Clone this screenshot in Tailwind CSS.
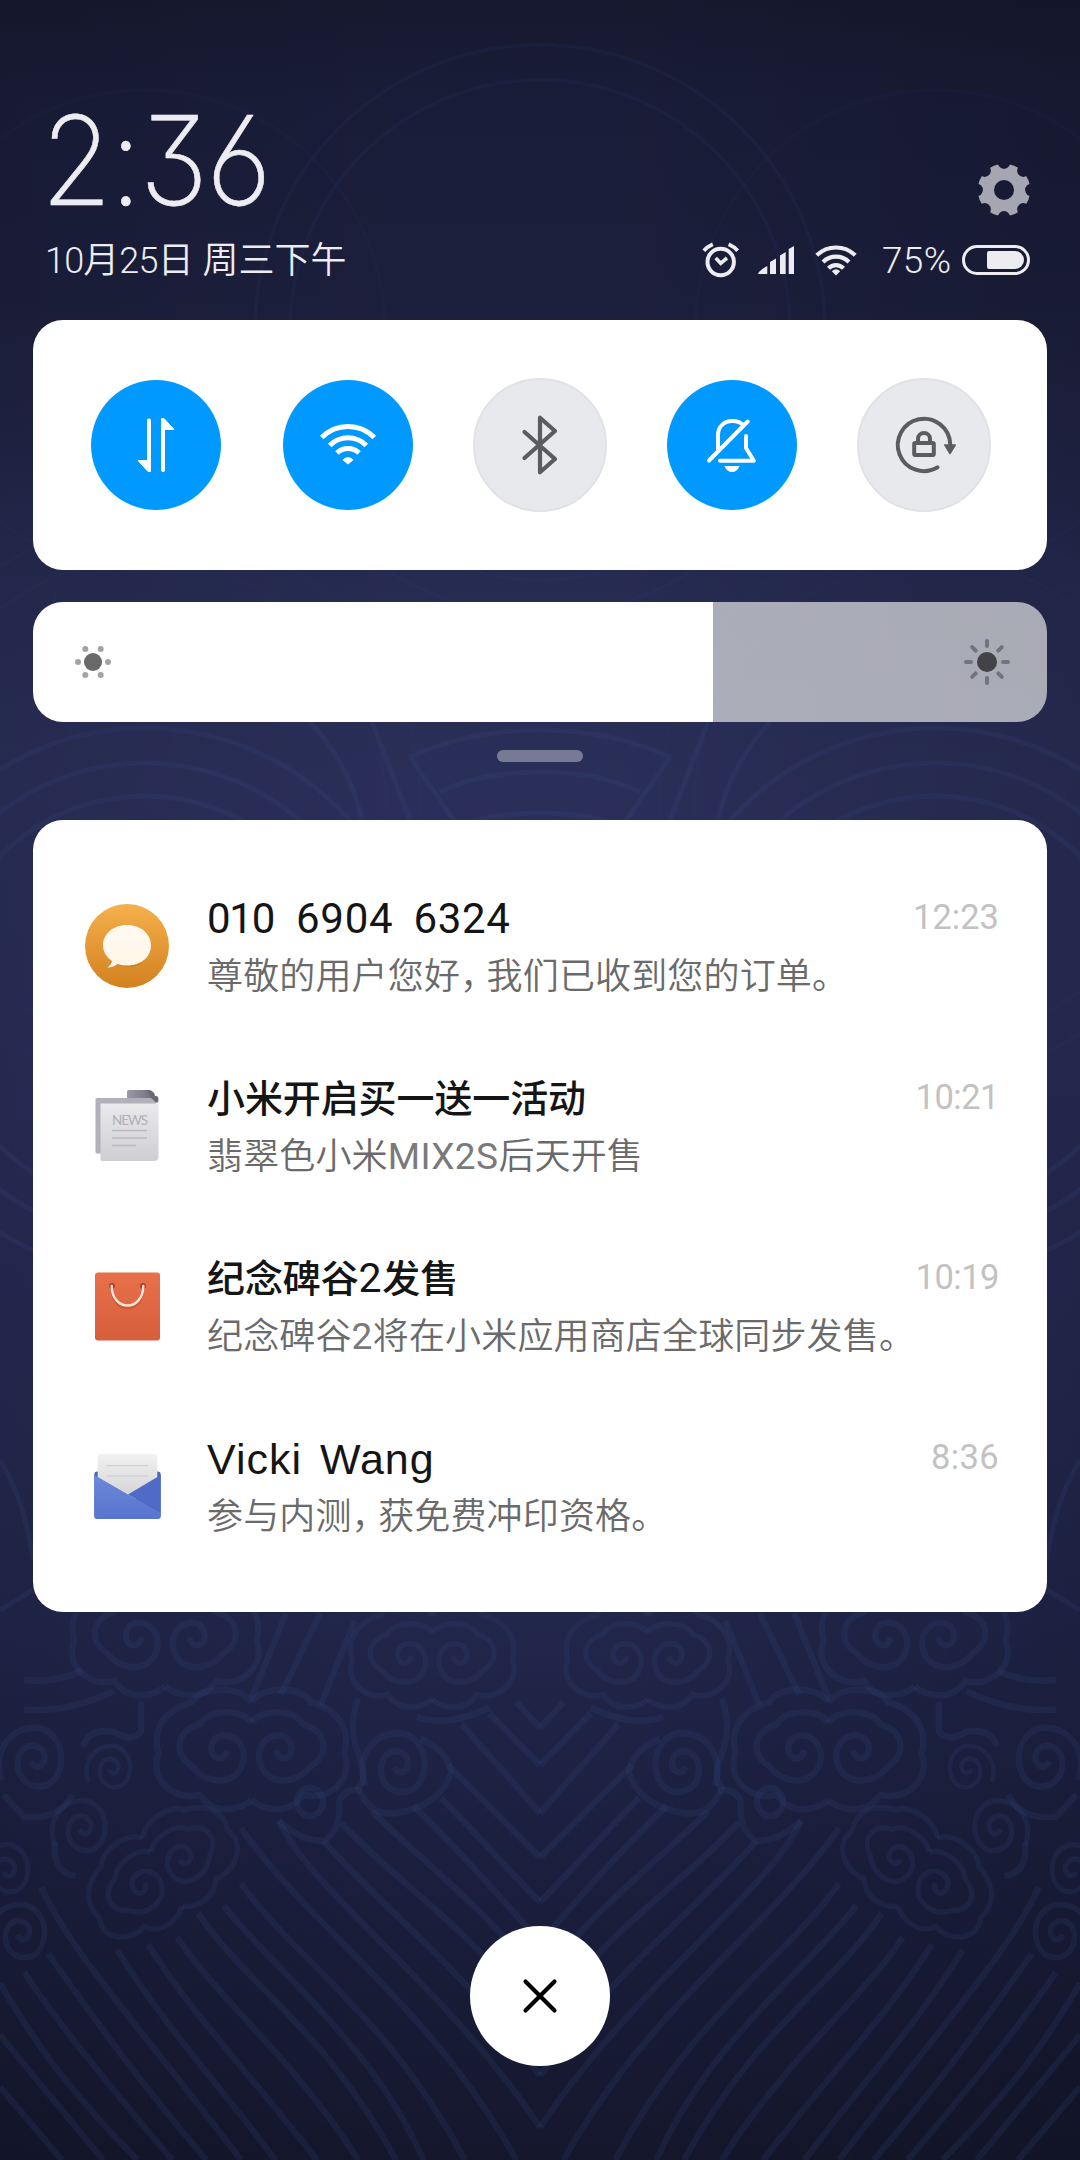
<!DOCTYPE html>
<html lang="zh-CN">
<head>
<meta charset="utf-8">
<title>通知中心</title>
<script src="https://cdn.jsdelivr.net/npm/@tailwindcss/browser@4"></script>
</head>
<body class="w-[1080px] h-[2160px] overflow-hidden font-[Roboto,'Noto_Sans_CJK_SC',sans-serif]">
<div class="relative w-[1080px] h-[2160px] overflow-hidden bg-[linear-gradient(to_bottom,#16192f_0%,#1a1d39_5%,#1c1f3c_14%,#262b52_27%,#2a2f59_36%,#292d58_50%,#21264b_75%,#1a1e3c_88%,#14172c_100%)]">
  <div class="absolute inset-0 bg-[linear-gradient(to_right,rgba(0,0,0,.09),transparent_40%,transparent_55%,rgba(0,0,0,.14))]"></div>

  <!-- wallpaper line pattern -->
  <svg class="absolute inset-0" width="1080" height="2160" viewBox="0 0 1080 2160" fill="none" stroke="#364a80" stroke-opacity=".19">
    <defs>
      <g id="halfcloud">
        <path d="M0,-85C-30,-125-130,-120-150,-80C-225,-60-225,5-170,35C-125,90-30,85-22,10C-20,-60-115,-70-117,-15C-115,20-75,20-72,-10"/>
        <path d="M0,-140C-40,-190-150,-180-172,-140C-250,-120-290,-70-270,0C-300,70-220,130-150,110C-110,170-30,150 0,125"/>
      </g>
      <g id="cloud"><use href="#halfcloud"/><use href="#halfcloud" transform="scale(-1 1)"/></g>
      <path id="curl" d="M-90,60C-120,-20-60,-90 20,-80C100,-60 100,50 40,75C-30,95-65,20-30,-20C0,-50 50,-20 30,15C20,30 0,25-5,10"/>
      <g id="half">
        <g transform="translate(0 1580) scale(.3444 .37)" stroke-width="18">
          <use href="#cloud" x="730" y="470"/>
          <use href="#cloud" transform="translate(475 795) rotate(-32) scale(.82)"/>
          <use href="#cloud" transform="translate(480 165) scale(.98)"/>
          <use href="#cloud" transform="translate(1255 215) scale(.86)"/>
          <use href="#curl" x="1150" y="495"/>
          <use href="#curl" x="95" y="480"/>
          <use href="#curl" transform="translate(320 505) scale(.7)"/>
          <use href="#curl" transform="translate(235 665) scale(.85)"/>
          <circle cx="900" cy="600" r="38"/>
          <use href="#curl" transform="translate(55 950) scale(.9)"/>
          <use href="#curl" transform="translate(15 780) scale(.8)"/>
          <path d="M1040,320Q1010,400 1040,470T1040,560Q1070,640 1150,630Q1280,610 1310,520Q1300,460 1220,430M1210,370Q1300,400 1420,345"/>
          <path d="M810,650Q870,705 940,705Q990,680 985,600Q1000,560 1050,570M70,270Q160,280 240,245M70,350Q200,360 330,300M410,330V410Q380,440 330,410Q260,400 240,450M10,580L70,640Q170,650 210,580M160,710Q150,790 220,800"/>
          <path d="M830,90L730,320M930,90L815,310M1030,110L930,340"/>
          <path d="M120,830C200,1000 400,1200 700,1568M140,1010C300,1220 400,1350 600,1568M70,1060C200,1240 350,1400 500,1568M0,1090C100,1250 200,1380 400,1568M340,1000C480,1210 650,1380 800,1568M430,985C560,1180 760,1370 920,1568M515,965C620,1120 860,1300 1040,1568M575,900C700,1080 950,1220 1150,1568M650,880C800,1060 1080,1250 1230,1568M700,820C850,1020 1130,1180 1350,1568M700,670C900,940 1250,1150 1500,1568M810,650C900,840 1300,1100 1568,1480M940,705C1100,880 1350,1050 1568,1340M990,655C1150,820 1350,920 1568,1200M1080,625C1250,780 1400,880 1568,1080M1200,610C1300,700 1420,820 1568,980M1280,590C1380,680 1480,790 1568,870M1300,500L1568,750M1340,390L1568,630M1420,360L1568,500M1500,330L1568,400M0,1230L300,1568M0,1370L180,1568"/>
        </g>
        <g stroke-width="5">
          <circle cx="145" cy="1001" r="205"/><circle cx="145" cy="1001" r="238"/><circle cx="145" cy="1001" r="273"/>
          <path d="M310,722Q350,765 362,820M372,722L410,820M410,757Q470,730 540,730M440,792Q480,772 540,772M470,822Q500,813 540,813M410,757L455,822"/>
          <path d="M0,1460Q25,1500 33,1560M0,1610L33,1590"/>
        </g>
        <g stroke-width="4" stroke-opacity=".05">
          <circle cx="145" cy="800" r="240"/><circle cx="145" cy="800" r="275"/><circle cx="540" cy="330" r="250"/><circle cx="540" cy="330" r="285"/><circle cx="145" cy="330" r="240"/>
        </g>
      </g>
    </defs>
    <use href="#half"/>
    <use href="#half" transform="translate(1080 0) scale(-1 1)"/>
  </svg>

  <div class="relative flex h-full flex-col px-[33px]">
    <!-- header -->
    <header class="flex h-[320px] flex-col pt-[97px] pl-[12px] pr-[17px] text-[#ececf1]">
      <div class="flex h-[133px] justify-between">
        <div class="-ml-[4px] flex origin-left scale-x-[.925] text-[124px] leading-[126px] font-extralight tracking-[-2px] font-[Inter] [font-feature-settings:'cv03','cv09'] [-webkit-text-stroke:.6px_#ececf1]">2:36</div>
        <svg class="mt-[66px] -mr-[1px]" width="54" height="54" viewBox="-27 -27 54 54">
          <mask id="gear" maskUnits="userSpaceOnUse" x="-27" y="-27" width="54" height="54"><circle r="26.300" fill="#fff"/><circle r="10"/>
            <g id="n"><circle cx="0" cy="-27.300" r="6.200"/><circle cx="0" cy="27.300" r="6.200"/><circle cx="27.300" r="6.200"/><circle cx="-27.300" r="6.200"/></g>
            <use href="#n" transform="rotate(45)"/></mask>
          <rect x="-27" y="-27" width="54" height="54" fill="#a5a6b1" mask="url(#gear)"/>
        </svg>
      </div>
      <div class="flex h-[60px] items-center justify-between">
        <div class="mt-[2px] text-[36px] leading-none font-[350] whitespace-pre"><span class="tracking-[-.8px]">10</span>月<span class="tracking-[-.8px]">25</span>日 周三下午</div>
        <div class="flex items-center">
          <svg class="-translate-x-px" width="38" height="36" viewBox="0 0 38 36" fill="none" stroke="currentColor"><circle cx="18.700" cy="20" r="13.200" stroke-width="4"/><path d="M13.700,16L18.700,21.300L25,16" stroke-width="3.600"/><path d="M1.800,8.800Q5.500,4.500 10.800,2.200M35.600,8.800Q32,4.500 26.600,2.200" stroke-width="3.800"/></svg>
          <svg class="ml-[17px]" width="36" height="28" viewBox="0 0 36 28" fill="currentColor"><path d="M0,28L1,26Q5,22 9.300,20V28ZM12,28V16L18,12.500V28ZM22,28V9.500L27.700,6V28ZM30.700,28V3L36,0V28Z"/></svg>
          <svg class="ml-[21px]" width="42" height="31" viewBox="0 0 42 31" fill="none" stroke="currentColor" stroke-width="4.200"><path d="M1.800,10.300A27.500 27.500 0 0 1 40.200,10.300M8,17A18.500 18.500 0 0 1 34,17M13.500,23.200A10.500 10.500 0 0 1 28.500,23.200"/><path stroke="none" fill="currentColor" d="M16.800,26.300Q21,22 25.200,26.300L21,30.500Z"/></svg>
          <span class="ml-[25px] mt-[1px] w-[71px] text-[37px] leading-none font-[350] tracking-[.3px] whitespace-nowrap">75%</span>
          <svg class="ml-[9px]" width="68" height="30" viewBox="0 0 68 30"><rect x="1.500" y="1.500" width="65" height="27" rx="13.500" fill="none" stroke="currentColor" stroke-width="3"/><path d="M25,8Q25,6 27,6H53A9 9 0 0 1 53,24H27Q25,24 25,22Z" fill="currentColor"/></svg>
        </div>
      </div>
    </header>

    <!-- quick toggles -->
    <section class="flex h-[250px] items-center justify-between rounded-[30px] bg-white px-[56px]">
      <div class="mx-[2px] flex size-[130px] items-center justify-center rounded-full bg-[#0099ff]">
        <svg width="80" height="80" viewBox="-40 -40 80 80" fill="#fff" stroke="#fff" stroke-width="1" stroke-linejoin="round"><path d="M-8.500,-25.500Q-7,-27 -5.500,-25.500V26.500H-8L-18,15.500H-8.500ZM8.500,26Q7,27.500 5.500,26V-26.500H8L18,-15.500H8.500Z"/></svg>
      </div>
      <div class="mx-[2px] flex size-[130px] items-center justify-center rounded-full bg-[#0099ff]">
        <svg width="80" height="80" viewBox="-40 -40 80 80" fill="none" stroke="#fff" stroke-width="5"><path d="M-26.300,-7.500A36.700 36.700 0 0 1 26.300,-7.500M-18.300,.5A25.500 25.500 0 0 1 18.300,.5M-11,8A16 16 0 0 1 11,8"/><path stroke="none" fill="#fff" d="M-5.500,15Q0,9 5.500,15L0,19.500Z"/></svg>
      </div>
      <div class="flex size-[134px] items-center justify-center rounded-full border-2 border-[#e1e2e5] bg-[#e8e9ed]">
        <svg width="80" height="80" viewBox="-40 -40 80 80" fill="none" stroke="#5b5c5e" stroke-width="4.200" stroke-linejoin="round" stroke-linecap="round"><path d="M-15.500,-13L15,14L0,27.300V-27.300L15,-14L-15.500,13"/></svg>
      </div>
      <div class="mx-[2px] flex size-[130px] items-center justify-center rounded-full bg-[#0099ff]">
        <svg width="80" height="80" viewBox="-40 -40 80 80" fill="none" stroke="#fff" stroke-width="4" stroke-linejoin="round" stroke-linecap="round"><path d="M-23,15.500L15.700,-23.500M-14,5V-10C-14,-19-7,-24 0,-24C5,-24 9,-22.500 11.500,-19.500M14,-9V3L21.800,15.700H-12"/><path stroke="none" fill="#fff" d="M-7.500,21H7.500Q5,27 0,27T-7.500,21Z"/></svg>
      </div>
      <div class="flex size-[134px] items-center justify-center rounded-full border-2 border-[#e1e2e5] bg-[#e8e9ed]">
        <svg width="80" height="80" viewBox="-40 -40 80 80" fill="none" stroke="#5b5c5e" stroke-width="4" stroke-linejoin="round" stroke-linecap="round"><path d="M13.500,22.400A26.200 26.200 0 1 1 26.200,-1M-6,-3V-6A6 6 0 0 1 6,-6V-3"/><rect x="-9.800" y="-2" width="19.600" height="12" rx="1"/><path stroke-width="1.500" fill="#5b5c5e" d="M20.800,0H31.200L26,8.500Z"/></svg>
      </div>
    </section>

    <!-- brightness -->
    <section class="mt-8 flex h-[120px] overflow-hidden rounded-[30px]">
      <div class="flex w-[680px] items-center bg-white pl-[40px]">
        <svg width="40" height="40" viewBox="-20 -20 40 40" fill="#a3a3a3"><circle r="9" fill="#696969"/><circle cx="-15" r="3"/><circle cx="15" r="3"/><circle cx="-7.700" cy="-13" r="3"/><circle cx="7.700" cy="-13" r="3"/><circle cx="-7.700" cy="13" r="3"/><circle cx="7.700" cy="13" r="3"/></svg>
      </div>
      <div class="flex flex-1 items-center justify-end bg-[#fffffa]/61 pr-[35px]">
        <svg width="50" height="50" viewBox="-25 -25 50 50" stroke="#72737c" stroke-width="4" stroke-linecap="round"><circle r="10" fill="#424247" stroke="none"/><path d="M0,-21V-16M0,21V16M-21,0H-16M21,0H16M-14.800,-14.800L-11.300,-11.300M14.800,-14.800L11.300,-11.300M-14.800,14.800L-11.300,11.300M14.800,14.800L11.300,11.300"/></svg>
      </div>
    </section>
    <div class="mt-7 h-3 w-[86px] self-center rounded-full bg-[#777a94]"></div>

    <!-- notifications -->
    <section class="mt-[58px] flex h-[792px] flex-col rounded-[30px] bg-white pt-[36px] pr-[48px] pl-[52px]">
      <article class="flex h-[180px]">
        <svg class="mt-[48px] shrink-0" width="84" height="84" viewBox="0 0 84 84">
          <defs><linearGradient id="o" x2="0" y2="1"><stop stop-color="#f5b04c"/><stop offset="1" stop-color="#d3811f"/></linearGradient><linearGradient id="b" x2="0" y2="1"><stop stop-color="#fffaf2"/><stop offset="1" stop-color="#fff6e6"/></linearGradient></defs>
          <circle cx="42" cy="42" r="42" fill="url(#o)"/>
          <path d="M25,59.500Q29,60 32,58.500Q44,64 56,58" fill="none" stroke="#b86d16" stroke-opacity=".45" stroke-width="4"/>
          <path d="M42,21C56,21 66,30 66,41.500S56,61.500 42,61.500Q37,61.500 32.500,60Q28,63.500 22.500,63.500Q26.500,60 27,57Q18,51 18,41.500C18,30 28,21 42,21Z" fill="url(#b)"/>
        </svg>
        <div class="ml-[38px] flex flex-1 flex-col pt-[38px]">
          <h2 class="h-[50px] text-[42px] leading-[50px] tracking-[.7px] text-[#151515] [word-spacing:9px]">0<span class="-mx-[2px]">1</span>0 6904 6324</h2>
          <p class="mt-[8px] h-[50px] text-[36px] leading-[50px] font-[350] tracking-[.15px] text-[#6a6a6a] whitespace-nowrap">尊敬的用户您好<span class="tracking-[-9.500px]">，</span>我们已收到您的订单。</p>
        </div>
        <time class="pt-[41px] text-[34.500px] leading-[40px] font-normal text-[#c2c2c2]">12:23</time>
      </article>
      <article class="flex h-[180px]">
        <svg class="mt-[48px] shrink-0" width="84" height="84" viewBox="0 0 84 84">
          <defs><linearGradient id="p" x2="0" y2="1"><stop stop-color="#eaeaed"/><stop offset="1" stop-color="#cdcdd3"/></linearGradient><linearGradient id="t" x2="1" y2="0"><stop stop-color="#9b99a6"/><stop offset="1" stop-color="#6f6c7c"/></linearGradient></defs>
          <path d="M12,14H71V30H20V69.500H12Q10.500,69.500 10.500,68V15.500Q10.500,14 12,14Z" fill="#b2b0ba"/>
          <path d="M43.500,6H64Q69,6 69.500,14H42V8Q42,6 43.500,6Z" fill="url(#t)"/>
          <path d="M62,6Q70,7 70,12H71.500Q73.500,12.500 73.500,16T71,18.500L66,14Z" fill="#6a6777"/>
          <path d="M15.500,19.500H73.500V72.500Q73.500,77 69,77H17Q15.500,77 15.500,75.500Z" fill="url(#p)"/>
          <text x="27" y="40.500" font-family="Lato, sans-serif" font-size="13.500" font-weight="400" fill="#b0b0b5" textLength="36">NEWS</text>
          <path d="M27,46.500H62M27,54H62M27,61.500H51" stroke="#b9b9be" stroke-width="1.500"/>
        </svg>
        <div class="ml-[38px] flex flex-1 flex-col pt-[38px]">
          <h2 class="h-[50px] text-[38px] leading-[50px] font-medium tracking-[-.1px] text-[#151515]">小米开启买一送一活动</h2>
          <p class="mt-[8px] h-[50px] text-[36px] leading-[50px] font-[350] tracking-[.15px] text-[#6a6a6a] whitespace-nowrap">翡翠色小米<span class="text-[37px] font-normal tracking-[.4px] text-[#7a7a7a]">MIX2S</span>后天开售</p>
        </div>
        <time class="pt-[41px] text-[34.500px] leading-[40px] font-normal tracking-[-.5px] text-[#c2c2c2]">10:21</time>
      </article>
      <article class="flex h-[180px]">
        <svg class="mt-[48px] shrink-0" width="84" height="84" viewBox="0 0 84 84" fill="none">
          <defs><linearGradient id="r" x2="0" y2="1"><stop stop-color="#e8714b"/><stop offset="1" stop-color="#d65e3b"/></linearGradient></defs>
          <rect x="10" y="8.500" width="65" height="68" rx="3" fill="url(#r)"/>
          <circle cx="27" cy="22" r="3" fill="#a8452a"/><circle cx="58" cy="22" r="3" fill="#a8452a"/>
          <path d="M27,25C28,50 57,50 58,25" stroke="#b54a2b" stroke-opacity=".5" stroke-width="3"/>
          <path d="M26.700,22C27,48 58,48 58.300,22" stroke="#fde6db" stroke-width="2.400" stroke-linecap="round"/>
        </svg>
        <div class="ml-[38px] flex flex-1 flex-col pt-[37px]">
          <h2 class="h-[50px] text-[38px] leading-[50px] font-medium tracking-[-.1px] text-[#151515]">纪念碑谷<span class="text-[41px] tracking-[.6px] font-normal">2</span>发售</h2>
          <p class="mt-[9px] h-[50px] text-[36px] leading-[50px] font-[350] tracking-[.15px] text-[#6a6a6a] whitespace-nowrap">纪念碑谷<span class="text-[37px] font-normal tracking-[.4px] text-[#7a7a7a]">2</span>将在小米应用商店全球同步发售。</p>
        </div>
        <time class="pt-[41px] text-[34.500px] leading-[40px] font-normal tracking-[-.5px] text-[#c2c2c2]">10:19</time>
      </article>
      <article class="flex h-[180px]">
        <svg class="mt-[48px] shrink-0" width="84" height="84" viewBox="0 0 84 84">
          <defs><linearGradient id="m" x2="0" y2="1"><stop stop-color="#6c88da"/><stop offset="1" stop-color="#5874cd"/></linearGradient><linearGradient id="w" x2="0" y2="1"><stop stop-color="#f1f1f2"/><stop offset="1" stop-color="#d3d3d6"/></linearGradient></defs>
          <rect x="9.300" y="27.500" width="66.400" height="47" rx="3" fill="#4a66bd"/>
          <rect x="12.700" y="10" width="59.600" height="45" rx="3" fill="url(#w)"/>
          <path d="M21,21.700H63M21,32H63" stroke="#d2d2d5" stroke-width="1.300"/>
          <path d="M75.700,31L43,50.500L75.700,69Z" fill="#4f6bc7"/>
          <path d="M9.300,31L43,50.500L75.700,69V72Q75.700,75 73,75H12Q9.300,75 9.300,72Z" fill="url(#m)"/>
        </svg>
        <div class="ml-[38px] flex flex-1 flex-col pt-[38px]">
          <h2 class="h-[50px] text-[43px] leading-[50px] tracking-[1px] text-[#151515] [word-spacing:5px] font-['Liberation_Sans']">Vicki Wang</h2>
          <p class="mt-[8px] h-[50px] text-[36px] leading-[50px] font-[350] tracking-[.15px] text-[#6a6a6a] whitespace-nowrap">参与内测<span class="tracking-[-9.500px]">，</span>获免费冲印资格。</p>
        </div>
        <time class="pt-[41px] text-[34.500px] leading-[40px] font-normal tracking-[.4px] text-[#c2c2c2]">8:36</time>
      </article>
    </section>

    <button class="mt-[314px] flex size-[140px] items-center justify-center self-center rounded-full bg-white">
      <svg width="40" height="40" viewBox="-20 -20 40 40" stroke="#000" stroke-width="4.200" stroke-linecap="round"><path d="M-14.500,-14.500L14.500,14.500M14.500,-14.500L-14.500,14.500"/></svg>
    </button>
  </div>
</div>
</body>
</html>
